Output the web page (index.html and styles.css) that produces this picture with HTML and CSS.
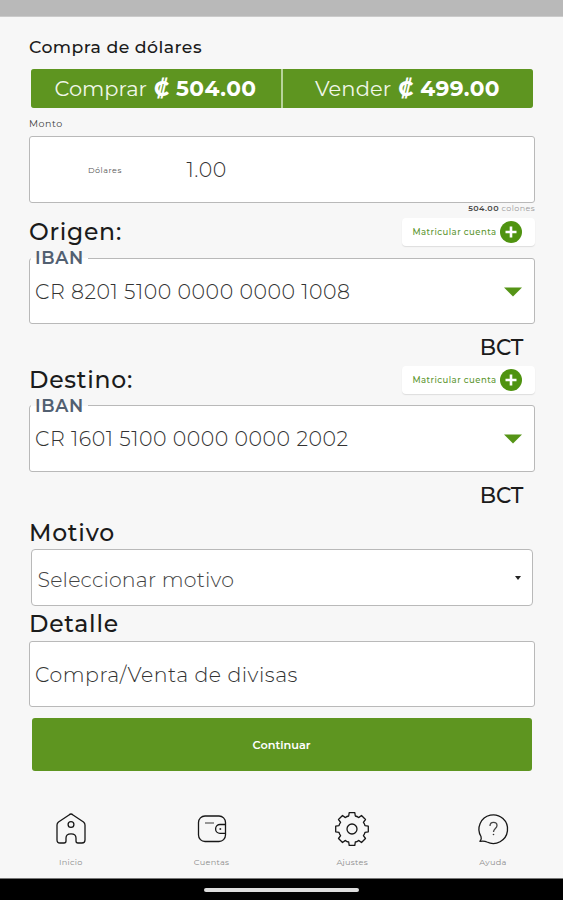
FILE: index.html
```html
<!DOCTYPE html>
<html lang="es">
<head>
<meta charset="utf-8">
<title>Compra de dólares</title>
<link rel="stylesheet" href="styles.css">
</head>
<body>
<div class="status"></div>
<main>
  <h1>Compra de dólares</h1>
  <div class="rates">
    <div class="rate"><span class="rate-name buy">Comprar</span><b class="colon">₡</b><b class="price">504.00</b></div>
    <div class="rate"><span class="rate-name sell">Vender</span><b class="colon">₡</b><b class="price">499.00</b></div>
  </div>
  <div class="label">Monto</div>
  <div class="field amount"><span class="currency">Dólares</span><span class="value">1.00</span></div>
  <div class="converted"><b>504.00</b> colones</div>

  <div class="heading-row">
    <h2>Origen:</h2>
    <button class="enroll"><span>Matricular cuenta</span><svg width="22" height="22" viewBox="0 0 22 22"><circle cx="11" cy="11" r="11" fill="#4f9310"/><path d="M11 5.5v11M5.500 11h11" stroke="#fff" stroke-width="2.6"/></svg></button>
  </div>
  <div class="field account"><span class="legend">IBAN</span><span>CR 8201 5100 0000 0000 1008</span><svg class="caret" width="18" height="10" viewBox="0 0 18 10"><path d="M0 .5h18L9 9.5z" fill="#559416"/></svg></div>
  <div class="bank">BCT</div>

  <div class="heading-row">
    <h2>Destino:</h2>
    <button class="enroll"><span>Matricular cuenta</span><svg width="22" height="22" viewBox="0 0 22 22"><circle cx="11" cy="11" r="11" fill="#4f9310"/><path d="M11 5.5v11M5.500 11h11" stroke="#fff" stroke-width="2.6"/></svg></button>
  </div>
  <div class="field account second"><span class="legend">IBAN</span><span>CR 1601 5100 0000 0000 2002</span><svg class="caret" width="18" height="10" viewBox="0 0 18 10"><path d="M0 .5h18L9 9.5z" fill="#559416"/></svg></div>
  <div class="bank">BCT</div>

  <h2 class="reason-title">Motivo</h2>
  <div class="select"><span>Seleccionar motivo</span><svg width="6" height="4" viewBox="0 0 6 4"><path d="M0 0h6L3 4z" fill="#222"/></svg></div>
  <h2 class="detail-title">Detalle</h2>
  <div class="field detail"><span>Compra/Venta de divisas</span></div>
  <button class="submit">Continuar</button>
</main>
<nav>
  <a><svg width="36" height="36" viewBox="0 0 36 36"><path d="M18 3 Q19 3 20 4L30.500 11Q32 12.200 32 14V29Q32 32 29 32H25Q23 32 23 30V27C23 21.500 13 21.500 13 27V30Q13 32 11 32H7Q4 32 4 29V14Q4 12.200 5.500 11L16 4Q17 3 18 3Z"/><circle cx="18" cy="13.500" r="2.900"/></svg><span>Inicio</span></a>
  <a><svg width="36" height="36" viewBox="0 0 36 36"><rect x="4.500" y="5" width="27" height="25.500" rx="6.500"/><path d="M31.500 13.500H26a4.200 4.200 0 0 0 0 8.800h5.500"/><path class="thin" d="M11 12h9"/><circle class="dot" cx="26.300" cy="18" r="1"/></svg><span>Cuentas</span></a>
  <a><svg width="36" height="36" viewBox="-18 -18 36 36"><path d="M-2.800-16.300H2.800L3.300-13Q5-12.700 6.600-11.400L9.500-13.500 13.500-9.500 11.400-6.600Q12.700-5 13-3.300L16.300-2.800V2.800L13 3.300Q12.700 5 11.400 6.600L13.500 9.500 9.500 13.500 6.600 11.400Q5 12.700 3.300 13L2.800 16.300H-2.800L-3.300 13Q-5 12.700-6.600 11.400L-9.500 13.500-13.500 9.500-11.400 6.600Q-12.700 5-13 3.300L-16.300 2.800V-2.800L-13-3.300Q-12.700-5-11.400-6.600L-13.500-9.500-9.500-13.500-6.600-11.400Q-5-12.700-3.300-13Z"/><circle r="5"/></svg><span>Ajustes</span></a>
  <a><svg width="36" height="36" viewBox="0 0 36 36"><path d="M6 25.500A14.300 14.300 0 1 1 12 31Q9.500 29.700 5 30.300 7 28 6 25.500Z"/><path class="mark" d="M15 15c0-5 7-4.500 7-.5 0 3-3.500 3-3.500 6.500"/><circle class="dot" cx="18.500" cy="23.500" r=".8"/></svg><span>Ayuda</span></a>
</nav>
<footer><i></i></footer>
</body>
</html>
```
FILE: styles.css
```css
* { box-sizing: border-box; }
body { margin: 0; width: 563px; height: 900px; overflow: hidden; display: flex; flex-direction: column; background: #f7f7f7; color: #1b1b1b; font-family: Montserrat, Inter, "Liberation Sans", sans-serif; white-space: nowrap; }
h1, h2 { margin: 0; font-weight: 500; }
button { border: 0; padding: 0; font-family: inherit; }
.status { height: 17px; background: #b9b9b9; border-bottom: 1px solid #cbcbcb; }
main { height: 783px; padding: 0 28px 0 29px; }
h1 { height: 52px; padding-top: 18px; font-size: 17.300px; line-height: 24px; letter-spacing: .45px; }
.rates { display: grid; grid-template-columns: 250px 250px; gap: 2px; width: 502px; height: 39px; margin-left: 1.500px; border-radius: 3px; overflow: hidden; background: #b8d39b; }
.rate { display: flex; align-items: center; justify-content: center; background: #5e9520; color: #fff; font-size: 21px; padding-bottom: 1px; }
.rate-name { font-weight: 400; color: #f1f7e9; }
.sell { letter-spacing: .1px; }
.colon { width: 16px; margin: 0 6px 0 7px; }
.price { font-weight: 700; font-size: 21.700px; letter-spacing: .45px; }
.label { height: 28px; padding-top: 8px; font-size: 9.500px; line-height: 16px; letter-spacing: .5px; color: #444; }
.field { position: relative; display: flex; align-items: center; height: 67px; padding-left: 5px; background: #fff; border: 1px solid #b9b9b9; border-radius: 3px; font-size: 20.500px; font-weight: 300; letter-spacing: .52px; color: #333; }
.amount .currency { width: 98.500px; margin-left: 53px; font-size: 8px; font-weight: 400; letter-spacing: .5px; color: #555; }
.converted { height: 15px; font-size: 8px; line-height: 11px; text-align: right; letter-spacing: .4px; color: #999; }
.converted b { color: #444; font-weight: 600; }
.heading-row { display: flex; justify-content: space-between; height: 28px; }
h2 { font-size: 23.500px; line-height: 28px; letter-spacing: .75px; }
.enroll { display: flex; align-items: center; width: 133px; height: 28px; padding-left: 10.500px; background: #fff; border-radius: 4px; box-shadow: 0 1px 1px #ddd; font-size: 8.500px; font-weight: 500; color: #5d9630; }
.enroll span { width: 87px; text-align: left; letter-spacing: .45px; }
.account { margin-top: 12px; height: 66px; }
.legend { position: absolute; left: 1px; top: -12px; padding: 0 4px; height: 22px; line-height: 22px; background: linear-gradient(#f7f7f7 50%, #fff 50%); color: #526071; font-weight: 600; font-size: 17.500px; letter-spacing: .7px; }
.second .legend { top: -11px; }
.caret { position: absolute; right: 12px; top: 28px; }
.bank { height: 42px; padding: 9px 11.500px 0 0; text-align: right; font-size: 21.500px; line-height: 28px; font-weight: 500; }
.second { margin-top: 11px; height: 67px; }
.reason-title { margin-top: 4px; height: 31px; padding-top: 1px; }
.select { display: flex; align-items: center; justify-content: space-between; height: 57px; margin: 0 2px; padding: 4px 11px 0 5.500px; background: #fff; border: 1px solid #b9b9b9; border-radius: 4px; font-size: 20.500px; font-weight: 300; letter-spacing: .2px; color: #444; }
.select svg { margin-bottom: 3px; }
.detail-title { margin-top: 3px; height: 32px; padding-top: 1px; }
.detail { height: 66px; }
.submit { display: flex; align-items: center; justify-content: center; width: 500px; height: 53px; margin: 11px 0 0 2.500px; background: #5e9520; border-radius: 3px; color: #fff; font-size: 11.300px; font-weight: 600; }
nav { display: grid; grid-template-columns: repeat(4, 140.700px); height: 77px; margin-top: 1px; }
nav a { display: flex; flex-direction: column; align-items: center; padding: 10px 0 0 1px; font-size: 8.200px; color: #8c8c8c; letter-spacing: .25px; }
nav span { margin-top: 10px; line-height: 10px; }
nav svg { fill: none; stroke: #171717; stroke-width: 1.300; stroke-linejoin: round; }
nav .thin { stroke: #777; stroke-width: 1.500; }
nav .mark { stroke: #444; }
nav .dot { fill: #333; stroke: none; }
footer { display: flex; justify-content: center; height: 22px; padding-top: 9px; background: #000; border-top: 1px solid #777; }
footer i { width: 155px; height: 4px; border-radius: 2px; background: #ddd; }
```
